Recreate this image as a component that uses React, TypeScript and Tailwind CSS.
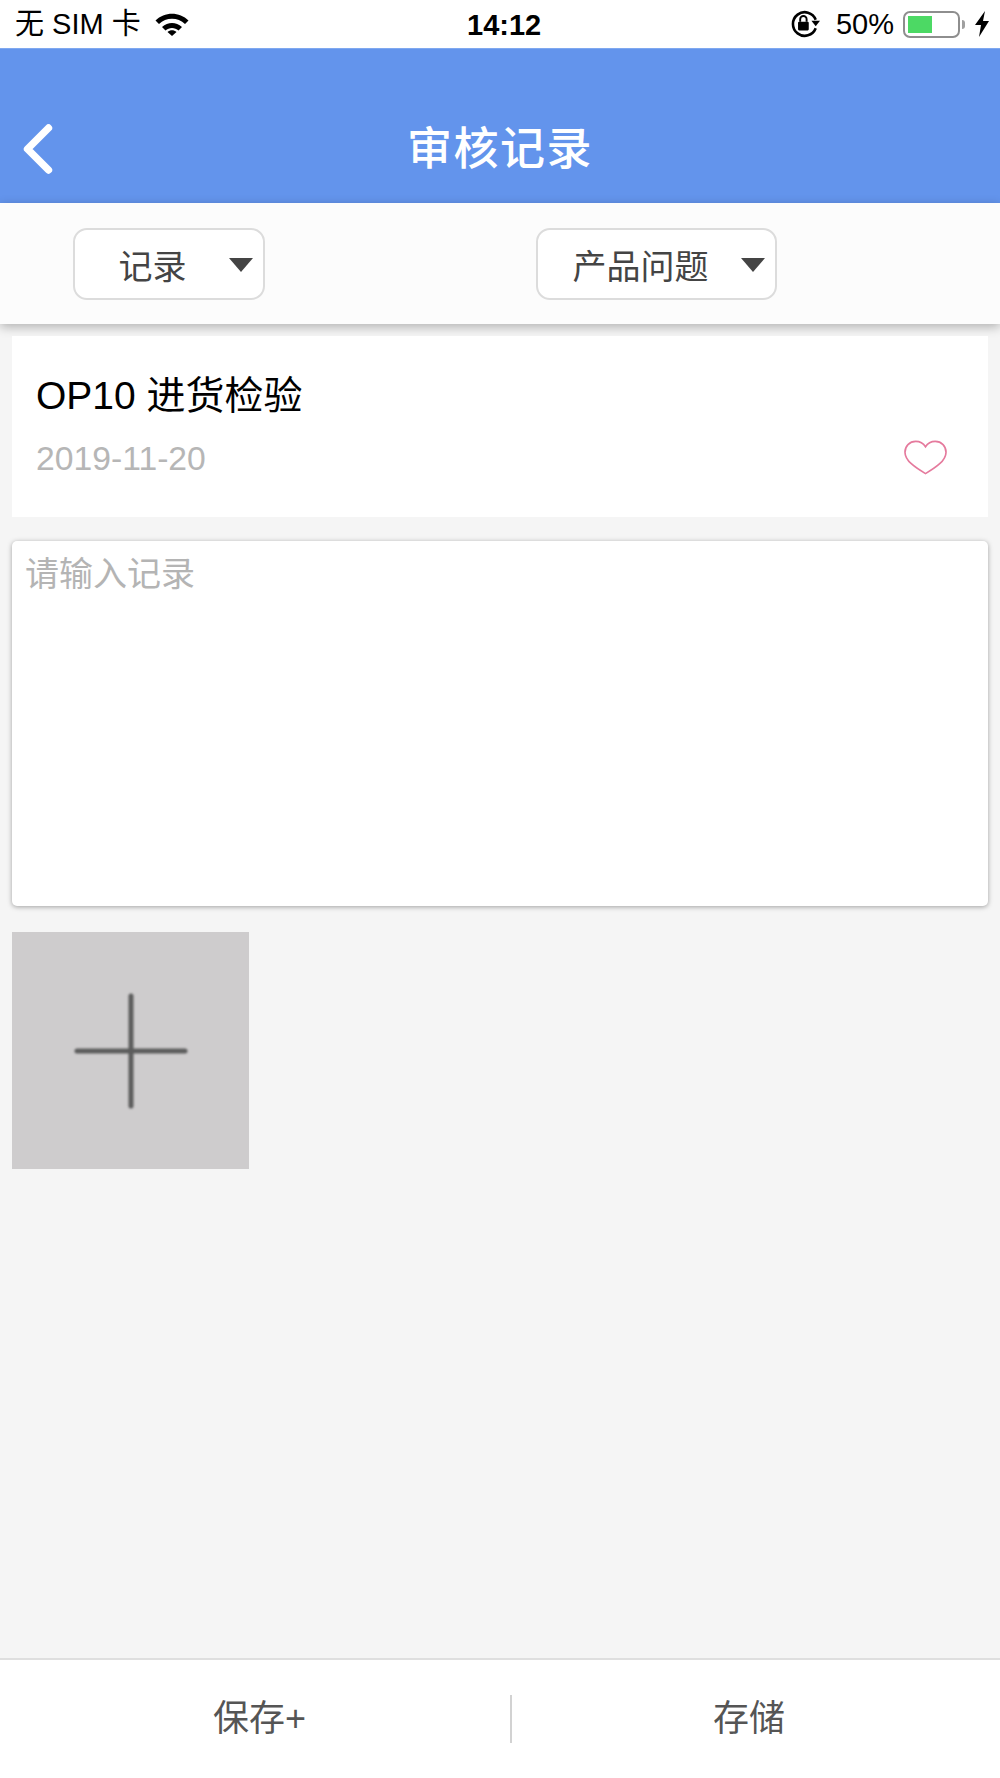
import { ChevronLeft } from "lucide-react";

const font = "font-['Liberation_Sans','Noto_Sans_CJK_SC',sans-serif]";

function Dropdown({ label, width, textWidth }: { label: string; width: string; textWidth: string }) {
  return (
    <div className={`${width} h-[72px] bg-white border-2 border-[#dcdcdc] rounded-[14px] flex items-center relative`}>
      <span className={`${textWidth} text-center text-[34px] leading-none text-[#444] pt-[5px]`}>{label}</span>
      {/* caret */}
      <svg className="absolute right-[9px] top-[27px]" width="26" height="16" viewBox="0 0 26 16">
        <path d="M1 1H25L13 15Z" fill="#444" />
      </svg>
    </div>
  );
}

export default function App() {
  return (
    <div className={`${font} w-[1000px] h-[1778px] flex flex-col bg-[#f5f5f5]`}>
      {/* Status bar */}
      <div className="h-[48px] bg-white flex items-center justify-between pl-[15px] pr-[10px] text-[#000] relative">
        <div className="flex items-center gap-[14px]">
          <span className="text-[29px] leading-none">无 SIM 卡</span>
          <svg width="34" height="24" viewBox="0 0 34 24">
            <path d="M0.5 8.5C9.5 -0.5 24.5 -0.5 33.5 8.5L30 12C23 5 11 5 4 12Z" fill="#000" />
            <path d="M7 15C13 9.5 21 9.5 27 15L23.5 18.5C20 15 14 15 10.5 18.5Z" fill="#000" />
            <path d="M12.5 20C15 17.8 19 17.8 21.5 20L17 24Z" fill="#000" />
          </svg>
        </div>
        <span className="absolute left-[467px] top-[8px] text-[29px] leading-[34px] font-bold">14:12</span>
        <div className="flex items-center">
          <svg width="30" height="28" viewBox="0 0 28 26">
            <path d="M24 9A11 11 0 1 0 24 17" fill="none" stroke="#000" strokeWidth="2.4" />
            <path d="M20 10H28L24 15Z" fill="#000" />
            <rect x="7.5" y="11" width="10" height="8" rx="1" fill="#000" />
            <path d="M9.5 11V8.5a3 3 0 0 1 6 0V11" fill="none" stroke="#000" strokeWidth="1.8" />
          </svg>
          <span className="text-[29px] leading-none ml-[16px] mr-[1px]">50%</span>
          <div className="ml-[8px] w-[57px] h-[27px] border-2 border-[#8e8e8e] rounded-[7px] p-[3px]">
            <div className="w-[24px] h-full bg-[#4cd964]" />
          </div>
          <div className="w-[3px] h-[9px] bg-[#a0a0a0] rounded-r-[3px] ml-[2px]" />
          <svg className="ml-[9px]" width="16" height="26" viewBox="0 0 16 26">
            <path d="M11 0L1 14H7L5 26L15 10H9Z" fill="#000" />
          </svg>
        </div>
      </div>

      {/* Header */}
      <div className="h-[155px] bg-[#6394ec] border-t border-[#7fa8f0] flex items-center justify-center relative">
        <ChevronLeft className="absolute -left-[4px] top-[58px] text-white" size={84} strokeWidth={2.1} />
        <span className="text-[45px] leading-none text-white tracking-[1.5px] pt-[46px] font-medium">审核记录</span>
      </div>

      {/* Filter bar */}
      <div className="h-[121px] bg-[#fcfcfc] flex items-start pt-[25px] pl-[73px] gap-[271px] shadow-[0_3px_10px_rgba(0,0,0,0.28)] relative">
        <Dropdown label="记录" width="w-[192px]" textWidth="w-[155px]" />
        <Dropdown label="产品问题" width="w-[241px]" textWidth="w-[205px]" />
      </div>

      {/* Content */}
      <div className="flex-1 px-[12px] pt-[12px] flex flex-col">
        <div className="h-[181px] bg-white pl-[24px] pr-[40px] pt-[37px] relative">
          <div className="text-[39px] leading-[46px] text-black">OP10 进货检验</div>
          <div className="text-[33.7px] leading-[38px] text-[#b6b6b6] mt-[20px]">2019-11-20</div>
          <svg className="absolute right-[41px] top-[104px]" width="43" height="35" viewBox="0 0 44 35">
            <path
              d="M22 6.5C19.5 2.5 16 1 12 1C5.5 1 1 6 1 12C1 21 12 28 22 34C32 28 43 21 43 12C43 6 38.5 1 32 1C28 1 24.5 2.5 22 6.5Z"
              fill="none"
              stroke="#e57a9d"
              strokeWidth="1.7"
            />
          </svg>
        </div>

        <div className="mt-[24px] h-[365px] bg-white rounded-[5px] shadow-[0_1px_5px_rgba(0,0,0,0.35)] pl-[13px] pt-[13px]">
          <span className="text-[34px] leading-[40px] text-[#b4b4b4]">请输入记录</span>
        </div>

        <div className="mt-[26px] w-[237px] h-[237px] bg-[#cecccd] flex items-center justify-center">
          <svg className="blur-[1px]" width="114" height="116" viewBox="0 0 114 116">
            <path d="M3 58H111M57 3V113" stroke="#5c5c5c" strokeWidth="5" strokeLinecap="round" />
          </svg>
        </div>
      </div>

      {/* Footer */}
      <div className="h-[120px] bg-white border-t-2 border-[#dfdfdf] flex items-center text-[36px] text-[#555] leading-none">
        <div className="w-[510px] text-center pl-[9px]">保存+</div>
        <div className="w-[2px] h-[48px] bg-[#d2d2d2]" />
        <div className="flex-1 text-center pr-[14px]">存储</div>
      </div>
    </div>
  );
}
